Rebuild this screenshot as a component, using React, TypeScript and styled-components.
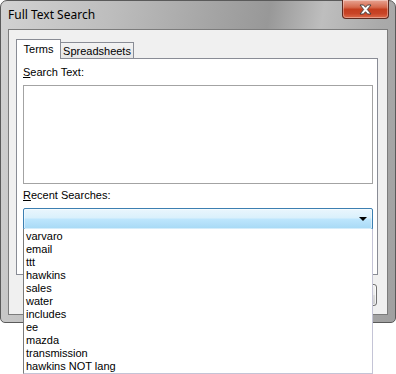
import styled, { createGlobalStyle } from 'styled-components';

const GlobalStyle = createGlobalStyle`
	html,
	body {
		margin: 0;
		background: #ffffff;
		font-family: 'Liberation Sans', Arial, sans-serif;
		font-size: 11px;
	}
`;

const Page = styled.div`
	width: 396px;
	height: 374px;
	position: relative;
`;

const Window = styled.div`
	position: relative;
	width: 396px;
	height: 323px;
	box-sizing: border-box;
	display: flex;
	flex-direction: column;
	padding: 0 7px 7px;
	border: 1px solid #5a5a5a;
	border-radius: 7px 7px 5px 5px;
	background: linear-gradient(
		100deg,
		#d2d2d2 0%,
		#bdbdbd 25%,
		#a4a4a4 48%,
		#989898 60%,
		#bebebe 72%,
		#aaaaaa 85%,
		#a0a0a0 100%
	);
`;

const TitleBar = styled.div`
	height: 28px;
	display: flex;
	justify-content: space-between;
	align-items: flex-start;
`;

const Title = styled.span`
	margin-top: 6px;
	font-family: 'Noto Sans', 'Open Sans', sans-serif;
	font-size: 12px;
	line-height: 16px;
	color: #000;
`;

const CloseButton = styled.div`
	width: 47px;
	height: 19px;
	margin: -1px -1px 0 0;
	box-sizing: border-box;
	display: flex;
	align-items: center;
	justify-content: center;
	border: 1px solid #5e2a20;
	border-top: none;
	border-radius: 0 0 4px 4px;
	background: linear-gradient(
		to bottom,
		#e8a493 0%,
		#d66a4e 40%,
		#c43e1f 52%,
		#c84427 75%,
		#dc6a4a 100%
	);
	box-shadow: inset 0 0 0 1px rgba(255, 255, 255, 0.35);
`;

const Client = styled.div`
	flex: 1;
	display: flex;
	flex-direction: column;
	padding: 9px 9px 0 7px;
	border: 1px solid #7c7c7c;
	background: #f0f0f0;
`;

const TabStrip = styled.div`
	display: flex;
	align-items: flex-end;
	height: 19px;
	position: relative;
	z-index: 1;
`;

const Tab = styled.div<{ $active?: boolean; $width: number }>`
	box-sizing: border-box;
	width: ${({ $width }) => $width}px;
	display: flex;
	align-items: center;
	justify-content: center;
	border: 1px solid #898c95;
	border-bottom: none;
	color: #000;
	height: ${({ $active }) => ($active ? '20px' : '16px')};
	margin-bottom: ${({ $active }) => ($active ? '-1px' : '0')};
	padding: ${({ $active }) => ($active ? '0 0 2px' : '0')};
	background: ${({ $active }) =>
		$active ? '#ffffff' : 'linear-gradient(to bottom, #f3f3f3, #e6e6e6)'};
	border-left: ${({ $active }) => ($active ? '1px solid #898c95' : 'none')};
`;

const Panel = styled.div`
	height: 217px;
	box-sizing: border-box;
	display: flex;
	flex-direction: column;
	padding: 7px 4px 0 6px;
	border: 1px solid #898c95;
	background: #ffffff;
`;

const Label = styled.div`
	line-height: 13px;
	color: #000;

	u {
		text-decoration: underline;
	}
`;

const TextBox = styled.div`
	height: 99px;
	margin: 6px 0 5px;
	box-sizing: border-box;
	border: 1px solid #a3a3a3;
	background: #ffffff;
`;

const ComboWrap = styled.div`
	position: relative;
	margin-top: 6px;
	width: 350px;
`;

const Combo = styled.div`
	height: 22px;
	box-sizing: border-box;
	display: flex;
	align-items: center;
	justify-content: flex-end;
	padding-right: 4px;
	border: 1px solid #3c7fb1;
	border-radius: 2px;
	background: linear-gradient(
		to bottom,
		#eaf6fd 0%,
		#d9f0fc 45%,
		#bee6fd 50%,
		#a7d9f5 100%
	);
	box-shadow: inset 0 0 0 1px rgba(255, 255, 255, 0.5);
`;

const Arrow = styled.span`
	width: 0;
	height: 0;
	margin-right: 1px;
	border-left: 4px solid transparent;
	border-right: 4px solid transparent;
	border-top: 4px solid #000;
`;

const DropList = styled.ul`
	position: absolute;
	top: 21px;
	left: 0;
	width: 350px;
	height: 145px;
	box-sizing: border-box;
	margin: 0;
	padding: 1px 0 0 2px;
	list-style: none;
	background: #ffffff;
	border: 1px solid #c4c4d6;
	border-left-color: #7a7a7a;
	border-top: none;
	z-index: 5;
`;

const DropItem = styled.li`
	line-height: 13px;
	color: #000;
	white-space: nowrap;
`;

const ButtonRow = styled.div`
	display: flex;
	justify-content: flex-end;
	gap: 6px;
	margin-top: 9px;
	padding-right: 1px;
`;

const Button = styled.div`
	width: 75px;
	height: 22px;
	box-sizing: border-box;
	display: flex;
	align-items: center;
	justify-content: center;
	border: 1px solid #707070;
	border-radius: 3px;
	background: linear-gradient(
		to bottom,
		#f2f2f2 0%,
		#ebebeb 50%,
		#dddddd 51%,
		#cfcfcf 100%
	);
	box-shadow: inset 0 0 0 1px rgba(255, 255, 255, 0.7);
`;

const recent = [
	'varvaro',
	'email',
	'ttt',
	'hawkins',
	'sales',
	'water',
	'includes',
	'ee',
	'mazda',
	'transmission',
	'hawkins NOT lang',
];

const CloseGlyph = function () {
	return (
		<svg width="13" height="11" viewBox="0 0 13 11">
			<path
				d="M1 1 H4.5 L6.5 3.3 L8.5 1 H12 L8.3 5.5 L12 10 H8.5 L6.5 7.7 L4.5 10 H1 L4.7 5.5 Z"
				fill="#ffffff"
				stroke="#3a3a3a"
				strokeWidth="0.9"
				strokeLinejoin="round"
			/>
		</svg>
	);
};

const App = function () {
	return (
		<Page>
			<GlobalStyle />
			<Window>
				<TitleBar>
					<Title>Full Text Search</Title>
					<CloseButton>
						<CloseGlyph />
					</CloseButton>
				</TitleBar>
				<Client>
					<TabStrip>
						<Tab $active $width={45}>
							Terms
						</Tab>
						<Tab $width={73}>Spreadsheets</Tab>
					</TabStrip>
					<Panel>
						<Label>
							<u>S</u>earch Text:
						</Label>
						<TextBox />
						<Label>
							<u>R</u>ecent Searches:
						</Label>
						<ComboWrap>
							<Combo>
								<Arrow />
							</Combo>
							<DropList>
								{recent.map((item) => (
									<DropItem key={item}>{item}</DropItem>
								))}
							</DropList>
						</ComboWrap>
					</Panel>
					<ButtonRow>
						<Button>OK</Button>
						<Button>Cancel</Button>
					</ButtonRow>
				</Client>
			</Window>
		</Page>
	);
};

export default App;
